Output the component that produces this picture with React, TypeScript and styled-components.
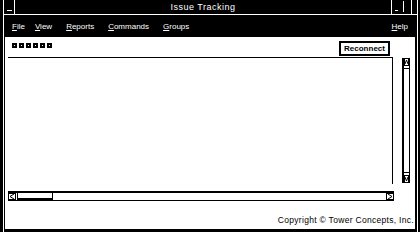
import React from "react"
import styled, { createGlobalStyle } from "styled-components"

const GlobalStyle = createGlobalStyle`
  html, body {
    margin: 0;
    padding: 0;
    background: #000;
  }
  body {
    font-family: "Liberation Sans", Arial, sans-serif;
  }
`

const Frame = styled.div`
  width: 420px;
  height: 232px;
  box-sizing: border-box;
  background: #000;
  padding: 0 2px 0 3px;
  display: flex;
`

const Inner = styled.div`
  flex: 1;
  display: flex;
  flex-direction: column;
  border-left: 1px solid #fff;
  border-right: 1px solid #fff;
`

const TitleBar = styled.div`
  height: 14px;
  border-bottom: 1px solid #fff;
  display: flex;
  color: #fff;
`

const WindowMenuBtn = styled.div`
  width: 11px;
  border-right: 1px solid #fff;
  display: flex;
  justify-content: center;
  align-items: flex-end;
  padding-bottom: 3px;
  box-sizing: border-box;
`

const Dash = styled.span<{ $w: number }>`
  display: block;
  width: ${p => p.$w}px;
  height: 1px;
  background: #fff;
`

const Title = styled.div`
  flex: 1;
  text-align: center;
  font-size: 9px;
  line-height: 14px;
  letter-spacing: 0.5px;
`

const Controls = styled.div`
  width: 19px;
  border-left: 1px solid #fff;
  border-right: 1px solid #fff;
  margin-right: 5px;
`

const MenuBar = styled.div`
  height: 22px;
  display: flex;
  align-items: center;
  padding: 0 9px 0 8px;
  gap: 14px;
  color: #fff;
  font-size: 8px;
`

const MenuItem = styled.span<{ $right?: boolean; $tight?: boolean }>`
  margin-left: ${p => (p.$right ? "auto" : "0")};
  margin-right: ${p => (p.$tight ? "-4px" : "0")};
  &::first-letter {
    text-decoration: underline;
  }
`

const Content = styled.div`
  flex: 1;
  margin: 0 2px 3px 1px;
  background: #fff;
  padding: 4px 5px 0 3px;
  display: flex;
  flex-direction: column;
  color: #000;
`

const Toolbar = styled.div`
  height: 15px;
  display: flex;
  align-items: flex-start;
  padding: 0 20px 0 4px;
`

const Squares = styled.div`
  display: flex;
  gap: 2px;
  margin-top: 2px;
`

const Square = styled.span`
  width: 5px;
  height: 5px;
  box-sizing: border-box;
  border: 2px solid #000;
`

const ReconnectButton = styled.button`
  margin-left: auto;
  width: 51px;
  height: 15px;
  box-sizing: border-box;
  border: 2px solid #000;
  background: #fff;
  padding: 0;
  font-family: "Liberation Sans", Arial, sans-serif;
  font-weight: bold;
  font-size: 8px;
  line-height: 11px;
  color: #000;
`

const MainRow = styled.div`
  display: flex;
  margin-top: 1px;
`

const TextArea = styled.div`
  width: 385px;
  height: 127px;
  box-sizing: border-box;
  border-top: 1px solid #000;
  border-right: 1px solid #000;
`

const VScroll = styled.div`
  width: 8px;
  height: 125px;
  margin: 1px 0 0 9px;
  box-sizing: border-box;
  border-left: 2px solid #000;
  border-right: 1px solid #000;
  display: flex;
  flex-direction: column;
`

const VThumb = styled.div`
  flex: 1;
  margin: 2px 0;
  border-top: 1px solid #000;
  border-bottom: 1px solid #000;
`

const HScroll = styled.div`
  width: 386px;
  height: 10px;
  margin-top: 7px;
  box-sizing: border-box;
  border-top: 2px solid #000;
  border-bottom: 1px solid #000;
  display: flex;
`

const HThumb = styled.div`
  width: 36px;
  margin-left: 1px;
  box-sizing: border-box;
  border-left: 1px solid #000;
  border-right: 1px solid #000;
  border-bottom: 2px solid #000;
`

const Spacer = styled.div`
  flex: 1;
`

const Footer = styled.div`
  margin: 14px -4px 0 0;
  text-align: right;
  font-size: 8.5px;
  line-height: 10px;
  letter-spacing: 0.3px;
`

const Arrow = ({ dir }: { dir: "up" | "down" | "left" | "right" }) => {
  const vertical = dir === "up" || dir === "down"
  const w = vertical ? 5 : 8
  const h = vertical ? 8 : 7
  const pts: Record<string, string> = {
    up: "1,6 2.5,2 4,6",
    down: "1,2 2.5,6 4,2",
    left: "6,1 2,3.5 6,6",
    right: "2,1 6,3.5 2,6",
  }
  return (
    <svg width={w} height={h} viewBox={`0 0 ${w} ${h}`} style={{ display: "block", flex: "none" }}>
      <rect x={0.5} y={0.5} width={w - 1} height={h - 1} fill="#fff" stroke="#000" strokeWidth={1} />
      <polyline points={pts[dir]} fill="none" stroke="#000" strokeWidth={1} />
    </svg>
  )
}

const menus = ["File", "View", "Reports", "Commands", "Groups"]

export default function App() {
  return (
    <>
      <GlobalStyle />
      <Frame>
        <Inner>
          <TitleBar>
            <WindowMenuBtn>
              <Dash $w={5} />
            </WindowMenuBtn>
            <Title>Issue Tracking</Title>
            <Controls>
              <svg width={19} height={14} viewBox="0 0 19 14" style={{ display: "block" }}>
                <rect x={3} y={10} width={3} height={1} fill="#fff" />
                <rect x={11} y={1} width={1} height={11} fill="#fff" />
              </svg>
            </Controls>
          </TitleBar>
          <MenuBar>
            {menus.map((m, i) => (
              <MenuItem key={m} $tight={i === 0}>{m}</MenuItem>
            ))}
            <MenuItem $right>Help</MenuItem>
          </MenuBar>
          <Content>
            <Toolbar>
              <Squares>
                {Array.from({ length: 6 }).map((_, i) => (
                  <Square key={i} />
                ))}
              </Squares>
              <ReconnectButton>Reconnect</ReconnectButton>
            </Toolbar>
            <MainRow>
              <TextArea />
              <VScroll>
                <Arrow dir="up" />
                <VThumb />
                <Arrow dir="down" />
              </VScroll>
            </MainRow>
            <HScroll>
              <Arrow dir="left" />
              <HThumb />
              <Spacer />
              <Arrow dir="right" />
            </HScroll>
            <Footer>Copyright © Tower Concepts, Inc.</Footer>
          </Content>
        </Inner>
      </Frame>
    </>
  )
}
